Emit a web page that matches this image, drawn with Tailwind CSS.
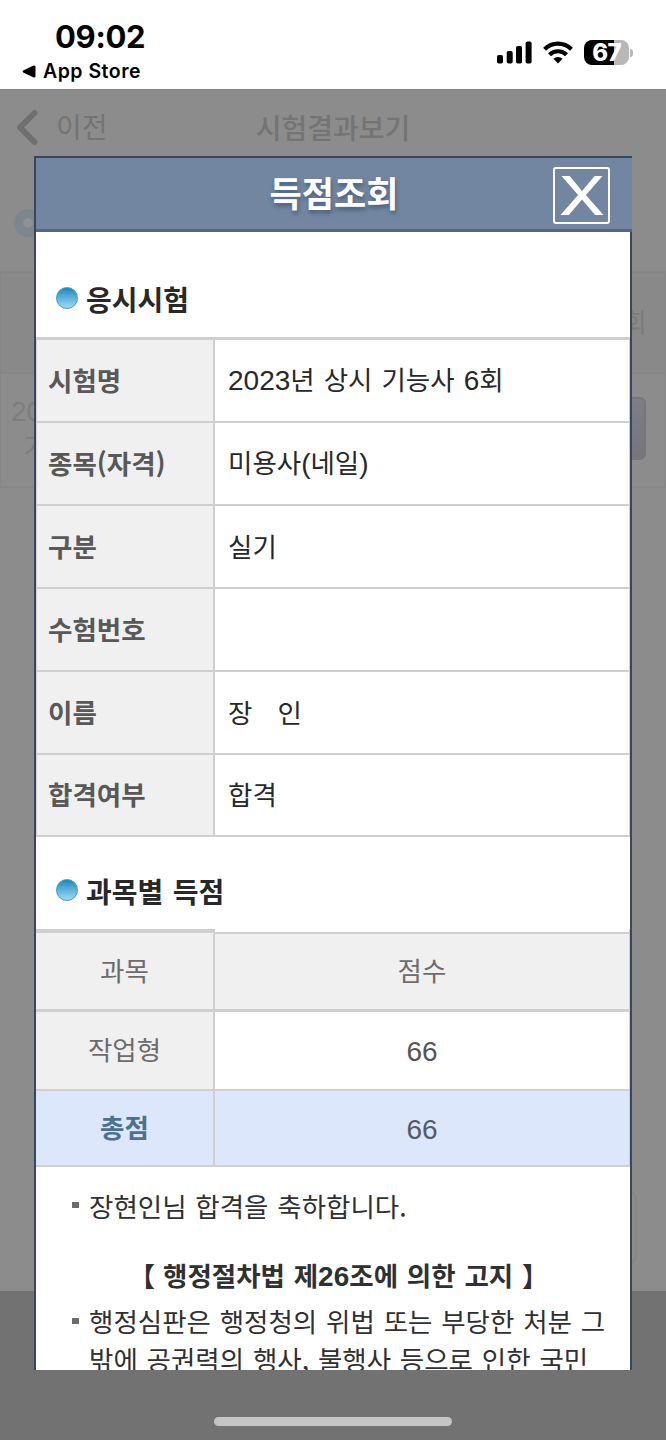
<!DOCTYPE html>
<html lang="ko">
  <head>
    <meta charset="UTF-8" />
    <meta name="viewport" content="width=device-width, initial-scale=1.0" />
    <script src="https://cdn.jsdelivr.net/npm/@tailwindcss/browser@4"></script>
    <title>득점조회</title>
  </head>

  <body class="bg-[#727272]">
    <div
      class="relative flex flex-col w-[666px] h-[1440px] overflow-hidden font-['Noto_Sans_CJK_KR',sans-serif] text-[26.5px] leading-[38px] [word-spacing:1.6px] whitespace-nowrap"
    >
      <!-- Status Bar -->
      <header class="flex justify-between h-[89px] shrink-0 bg-white text-black font-['Inter',sans-serif] [word-spacing:0px]">
        <div class="pl-[22px] pt-[19px]">
          <p class="pl-[33px] text-[31px] leading-[36px] font-bold tracking-[-0.3px]">09:02</p>
          <p class="flex items-center gap-[7px] text-[19.5px] leading-[33px] font-semibold tracking-[0.5px]">
            <svg class="w-[14px] h-[13px]" viewBox="0 0 14 13"><path d="M1.2 5.6 11.6.6Q13.5 0 13.5 2V11Q13.5 13 11.6 12.4L1.2 7.4Q0 6.5 1.2 5.6Z" /></svg>
            App Store
          </p>
        </div>
        <div class="flex items-start pt-[40px] pr-[33px]">
          <svg class="w-[36px] h-[25px]" viewBox="0 0 36 25">
            <rect x="0" y="15" width="6" height="8.5" rx="1.8" />
            <rect x="9.7" y="11" width="6" height="12.5" rx="1.8" />
            <rect x="19" y="6" width="6" height="17.5" rx="1.8" />
            <rect x="28.6" y="1.5" width="6" height="22" rx="1.8" />
          </svg>
          <svg class="w-[30px] h-[25px] ml-[10px]" viewBox="0 0 30 25" fill="none" stroke="#000" stroke-width="4.2">
            <path d="M1.6 9.2a19 19 0 0 1 26.8 0" />
            <path d="M6.5 14.8a12 12 0 0 1 17 0" />
            <path d="M15 23.4 10.4 18.8a6.6 6.6 0 0 1 9.2 0Z" fill="#000" stroke="none" />
          </svg>
          <div class="flex items-center ml-[11px]">
            <div
              class="flex items-center justify-center w-[45px] h-[25px] rounded-[8px] bg-[linear-gradient(90deg,#000_67%,#b8b8b8_67%)] text-white text-[24px] leading-[25px] font-extrabold tracking-[-0.8px]"
            >
              67
            </div>
            <div class="w-[3px] h-[8px] ml-[1px] rounded-r-full bg-[#b8b8b8]"></div>
          </div>
        </div>
      </header>

      <!-- Dimmed Page -->
      <main class="h-[1202px] shrink-0 bg-[#8c8c8c] text-[#747474] border-t border-[#858585]">
        <div class="relative flex items-center justify-center h-[73px] text-[28px]">
          <div class="absolute left-[16px] top-[16px] flex items-center gap-[18px]">
            <svg class="w-[22px] h-[38px] mt-[2px]" viewBox="0 0 22 38" fill="none" stroke="#707070" stroke-width="6" stroke-linecap="round" stroke-linejoin="round">
              <path d="M18.5 5 4 19.5 18.5 34" />
            </svg>
            <span>이전</span>
          </div>
          <h1 class="font-medium">시험결과보기</h1>
        </div>
        <div class="h-[108px] pt-[46px] pl-[14px]">
          <div class="size-[28px] rounded-full border-[9px] border-[#7b878c] bg-[#8e9295]"></div>
        </div>
        <div class="flex items-center justify-end h-[101px] pr-[18px] pb-[4px] border-t-2 border-x border-[#868686] bg-[#898989] text-[#7b7b7b]">회</div>
        <div class="flex justify-between h-[116px] border-y-2 border-x border-[#868686] text-[#7d7d7d]">
          <div class="pt-[20px] pl-[10px] leading-[36px]">
            <p class="font-['Liberation_Sans',sans-serif] text-[28px]">20</p>
            <p class="pl-[12px] -mt-[2px]">기</p>
          </div>
          <div class="w-[90px] h-[63px] mt-[23px] mr-[19px] rounded-[6px] border-2 border-[#76767c] bg-linear-to-b from-[#7e7e85] to-[#75757c]"></div>
        </div>
        <div class="w-[580px] h-[73px] ml-[57px] mt-[703px] rounded-[8px] border-2 border-[#868686]"></div>
      </main>

      <!-- Home Indicator -->
      <div class="absolute left-[214px] top-[1417px] w-[238px] h-[9px] rounded-full bg-[#c5c5c5]"></div>

      <!-- Score Popup -->
      <section class="absolute left-[34px] top-[156px] w-[598px] h-[1214px] overflow-hidden border-t-2 border-l-2 border-[#364762] bg-white text-[#282828]">
        <div class="relative flex items-center justify-center h-[74px] border-b-[3px] border-[#536889] bg-[#7286a1]">
          <h2 class="pb-[3px] text-[35px] font-bold text-white [text-shadow:1px_3px_4px_#4a5c78]">득점조회</h2>
          <button class="absolute right-[22px] top-[9px] flex items-center justify-center size-[57px] rounded-[3px] border-2 border-white">
            <svg class="w-[44px] h-[41px]" viewBox="0 0 44 42" fill="#fff">
              <path d="M1 1H9.5L22 16.5 35 1H43L26 20.5 44 41H35.5L22 25 8.5 41H0L18 20.5Z" />
            </svg>
          </button>
        </div>

        <div class="h-[1138px] border-r-2 border-[#364762]">
          <!-- Exam Info -->
          <h3 class="flex items-center gap-[8px] h-[105px] pt-[29px] pl-[20px] text-[28px] font-bold">
            <span class="size-[22px] -mt-[3px] rounded-full border-[1.5px] border-[#3e9cc1] bg-linear-to-b from-[#1487bd] to-[#9cdcf6]"></span>
            응시시험
          </h3>
          <dl class="grid grid-cols-[178px_1fr] grid-rows-[83px_83px_83px_83px_83px_82px] border-t-[3px] border-l border-r border-[#cfcfcf] *:flex *:items-center *:border-[#cfcfcf] *:border-b-2 *:pb-[2px] [&>dt]:border-r-2 [&>dt]:bg-[#f0f0f0] [&>dt]:pl-[11px] [&>dt]:font-bold [&>dt]:text-[#585858] [&>dd]:pl-[13px]">
            <dt>시험명</dt>
            <dd><p><span class="font-['Liberation_Sans'] text-[28px]">2023</span>년 상시 기능사 <span class="font-['Liberation_Sans'] text-[28px]">6</span>회</p></dd>
            <dt>종목(자격)</dt>
            <dd><p>미용사<span class="font-['Liberation_Sans'] text-[28px]">(</span>네일<span class="font-['Liberation_Sans'] text-[28px]">)</span></p></dd>
            <dt>구분</dt>
            <dd>실기</dd>
            <dt>수험번호</dt>
            <dd></dd>
            <dt>이름</dt>
            <dd><span class="mr-[25px]">장</span>인</dd>
            <dt>합격여부</dt>
            <dd>합격</dd>
          </dl>

          <!-- Subject Scores -->
          <h3 class="flex items-center gap-[8px] h-[92px] pt-[16px] pl-[20px] text-[28px] font-bold">
            <span class="size-[22px] -mt-[3px] rounded-full border-[1.5px] border-[#3e9cc1] bg-linear-to-b from-[#1487bd] to-[#9cdcf6]"></span>
            과목별 득점
          </h3>
          <div class="grid grid-cols-[179px_1fr] grid-rows-[83px_79px_76px] border-r border-[#cfcfcf] *:flex *:items-center *:justify-center *:border-[#cfcfcf] text-[#6c6c6c]">
            <div class="pb-[3px] border-t-4 border-b-3 border-r-2 bg-[#f0f0f0]">과목</div>
            <div class="pb-[4px] mt-[3px] border-t-2 border-b-3 bg-[#f0f0f0]">점수</div>
            <div class="pb-[4px] border-b-2 border-r-2 bg-[#f0f0f0]">작업형</div>
            <div class="pt-[2px] border-b-2 font-['Liberation_Sans'] text-[28px] text-[#555]">66</div>
            <div class="pb-[3px] border-b-2 border-r-2 bg-[#dce7fb] font-bold text-[#4b718f]">총점</div>
            <div class="pt-[3px] border-b-2 bg-[#dce7fb] font-['Liberation_Sans'] text-[28px] text-[#555b66]">66</div>
          </div>

          <!-- Notice -->
          <div class="pt-[20px] pl-[53px] text-[#303030] [word-spacing:1.4px]">
            <p class="relative before:absolute before:-left-[17px] before:top-[15px] before:h-[6px] before:w-[7px] before:bg-[#6b6b6e]">장현인님 합격을 축하합니다.</p>
            <h4 class="flex mt-[31px] pl-[41px] font-bold"><span class="flex justify-end w-[25px] mr-[8px]">【</span><span>행정절차법 제<span class="font-['Liberation_Sans'] text-[28px]">26</span>조에 의한 고지 】</span></h4>
            <p class="relative mt-[6px] before:absolute before:-left-[17px] before:top-[16px] before:h-[6px] before:w-[7px] before:bg-[#6b6b6e]">행정심판은 행정청의 위법 또는 부당한 처분 그<br />밖에 공권력의 행사, 불행사 등으로 인한 국민</p>
          </div>
        </div>
      </section>
    </div>
  </body>
</html>
